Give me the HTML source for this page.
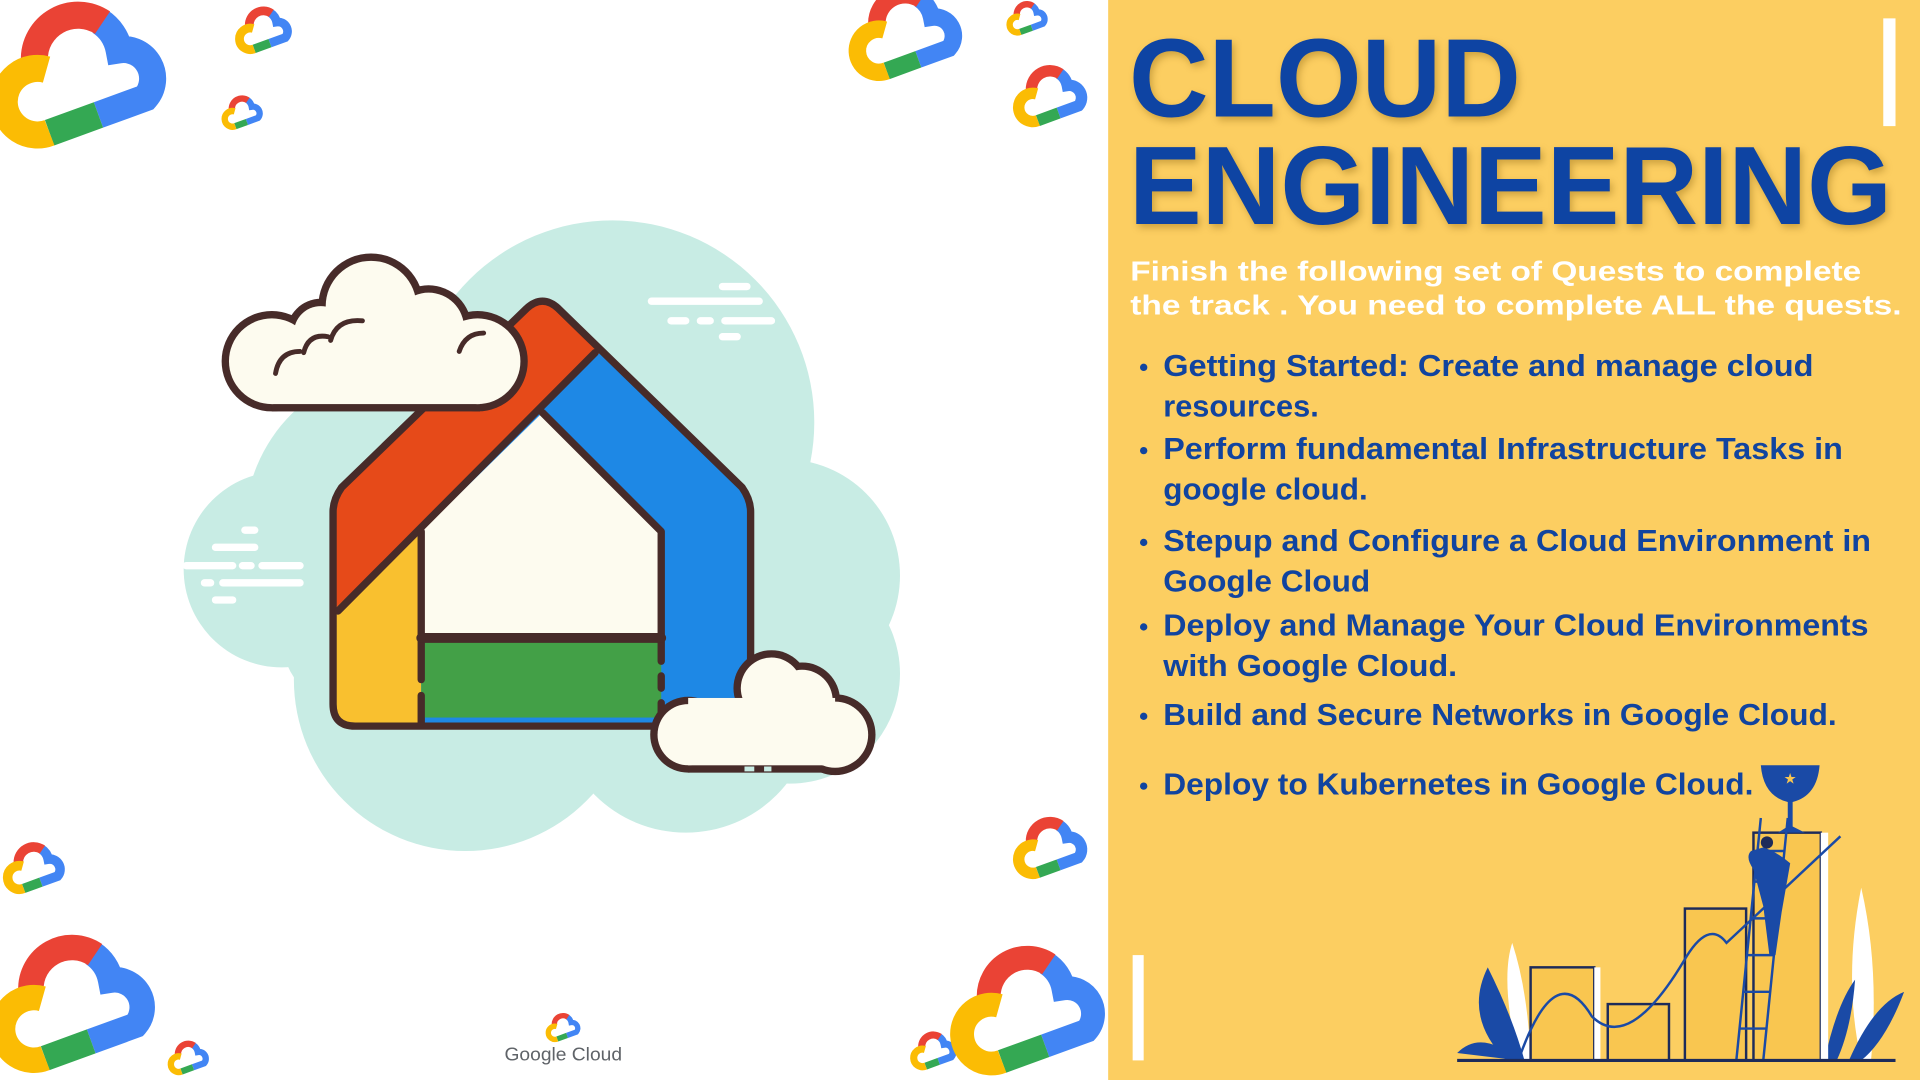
<!DOCTYPE html>
<html><head><meta charset="utf-8"><style>
html,body{margin:0;padding:0;background:#fff;}
svg{display:block;}
</style></head><body>
<svg width="1920" height="1080" viewBox="0 0 1568 882" xmlns="http://www.w3.org/2000/svg">
<defs>
<symbol id="g" viewBox="0 0 100 80" overflow="visible">
<g transform="rotate(-20 50 45)" fill="none" stroke-width="13">
<path d="M68,24 A21,21 0 0 1 72,40 A14,14 0 0 1 76,66 L52,66" stroke="#4285f4"/>
<path d="M52,66 L27,66" stroke="#34a853"/>
<path d="M32,31 A21,21 0 0 1 69,25" stroke="#ea4335"/>
<path d="M27,66 A16,16 0 1 1 36,37" stroke="#fbbc04"/>
</g>
</symbol>
<clipPath id="hc"><path d="M272,418 Q272,408 279,398 L430,252 Q443,240 456,252 L606,398 Q613,408 613,418 L613,575 Q613,593 595,593 L290,593 Q272,593 272,575 Z"/></clipPath>
</defs>
<rect x="0" y="0" width="905" height="882" fill="#fff"/>
<rect x="905" y="0" width="663" height="882" fill="#fcce61"/>

<!-- teal blob -->
<g fill="#c8ece4">
<circle cx="500" cy="345" r="165"/><circle cx="230" cy="465" r="80"/><circle cx="640" cy="470" r="95"/>
<circle cx="645" cy="550" r="90"/><circle cx="380" cy="555" r="140"/><circle cx="560" cy="575" r="105"/>
<circle cx="330" cy="430" r="130"/><circle cx="460" cy="470" r="170"/><circle cx="290" cy="520" r="60"/>
</g>
<g stroke="#fff" stroke-width="6" stroke-linecap="round">
<line x1="532" y1="246" x2="620" y2="246"/><line x1="590" y1="234" x2="610" y2="234"/>
<line x1="548" y1="262" x2="560" y2="262"/><line x1="572" y1="262" x2="580" y2="262"/><line x1="592" y1="262" x2="630" y2="262"/>
<line x1="590" y1="275" x2="602" y2="275"/>
<line x1="200" y1="433" x2="208" y2="433"/><line x1="176" y1="447" x2="208" y2="447"/>
<line x1="152" y1="462" x2="190" y2="462"/><line x1="198" y1="462" x2="205" y2="462"/><line x1="214" y1="462" x2="245" y2="462"/>
<line x1="167" y1="476" x2="172" y2="476"/><line x1="182" y1="476" x2="245" y2="476"/><line x1="176" y1="490" x2="190" y2="490"/>
</g>

<!-- house -->
<g clip-path="url(#hc)">
<rect x="260" y="230" width="360" height="370" fill="#1e88e5"/>
<polygon points="272,499 260,400 443,220 495,283" fill="#e64a19"/>
<polygon points="260,510 344,429 344,600 260,600" fill="#f9c02f"/>
</g>
<polygon points="344,434 443,337 540,434 540,521 344,521" fill="#fdfbef"/>
<rect x="344" y="524" width="196" height="62" fill="#43a047"/>
<g fill="none" stroke="#472b29" stroke-width="6" stroke-linejoin="round" stroke-linecap="round">
<path d="M272,418 Q272,408 279,398 L430,252 Q443,240 456,252 L606,398 Q613,408 613,418 L613,575 Q613,593 595,593 L290,593 Q272,593 272,575 Z"/>
<path d="M486,288 L276,499"/>
<path d="M344,434 L344,555 M344,568 L344,590"/>
<path d="M443,337 L540,434 L540,540 M540,552 L540,562 M540,574 L540,590"/>
<path d="M344,521 L540,521" stroke-width="8"/>
</g>

<!-- cloud 1 -->
<g fill="#472b29">
<circle cx="222" cy="295" r="41"/><circle cx="390" cy="295" r="41"/><circle cx="303" cy="250" r="43"/>
<circle cx="262" cy="272" r="28"/><circle cx="350" cy="268" r="35"/><rect x="222" y="280" width="170" height="56"/>
</g>
<g fill="#fdfbef">
<circle cx="222" cy="295" r="35"/><circle cx="390" cy="295" r="35"/><circle cx="303" cy="250" r="37"/>
<circle cx="262" cy="272" r="22"/><circle cx="350" cy="268" r="29"/><rect x="222" y="280" width="170" height="50"/>
</g>
<g fill="none" stroke="#472b29" stroke-width="4" stroke-linecap="round">
<path d="M225,305 Q228,287 245,287"/><path d="M248,288 Q252,272 268,275"/><path d="M270,278 Q275,260 296,262"/>
<path d="M375,287 Q380,272 395,272"/>
</g>
<!-- cloud 2 -->
<g fill="#472b29">
<circle cx="562" cy="600" r="31"/><circle cx="682" cy="600" r="33"/><circle cx="655" cy="572" r="31"/>
<circle cx="630" cy="562" r="31"/><rect x="562" y="570" width="120" height="61"/>
</g>
<g fill="#fdfbef">
<circle cx="562" cy="600" r="25"/><circle cx="682" cy="600" r="27"/><circle cx="655" cy="572" r="25"/>
<circle cx="630" cy="562" r="25"/><rect x="562" y="570" width="120" height="55"/>
</g>
<path d="M608,628 L616,628 M624,628 L630,628" stroke="#c8ece4" stroke-width="4"/>

<!-- google logos -->
<use href="#g" x="-20" y="-15" width="170" height="136"/>
<use href="#g" x="188" y="0" width="55" height="44"/>
<use href="#g" x="178" y="74" width="40" height="32"/>
<use href="#g" x="685" y="-22" width="110" height="88"/>
<use href="#g" x="819" y="-3" width="40" height="32"/>
<use href="#g" x="822" y="46" width="72" height="58"/>
<use href="#g" x="-2" y="682" width="60" height="48"/>
<use href="#g" x="822" y="660" width="72" height="58"/>
<use href="#g" x="-20" y="748" width="160" height="128"/>
<use href="#g" x="134" y="846" width="40" height="32"/>
<use href="#g" x="740" y="838" width="45" height="36"/>
<use href="#g" x="765" y="748" width="150" height="140"/>
<use href="#g" x="443" y="824" width="34" height="27"/>
<text x="460" y="866" font-family="Liberation Sans, sans-serif" font-size="15" fill="#5f6368" text-anchor="middle" textLength="96" lengthAdjust="spacingAndGlyphs">Google Cloud</text>

<!-- white bars -->
<rect x="1538" y="15" width="10" height="88" fill="#fff"/>
<rect x="925" y="780" width="9" height="86" fill="#fff"/>

<!-- text -->
<g font-family="Liberation Sans, sans-serif" font-weight="bold">
<g fill="#0e44a3" font-size="91" style="filter:drop-shadow(2px 3px 3px rgba(120,80,0,0.35))">
<text x="922" y="95" textLength="320" lengthAdjust="spacingAndGlyphs">CLOUD</text>
<text x="922" y="183" textLength="623" lengthAdjust="spacingAndGlyphs">ENGINEERING</text>
</g>
<g fill="#fff" font-size="23">
<text x="923" y="229" textLength="597" lengthAdjust="spacingAndGlyphs">Finish the following set of Quests to complete</text>
<text x="923" y="257" textLength="630" lengthAdjust="spacingAndGlyphs">the track . You need to complete ALL the quests.</text>
</g>
<g fill="#11449f" font-size="25">
<text x="950" y="307" textLength="531" lengthAdjust="spacingAndGlyphs">Getting Started: Create and manage cloud</text>
<text x="950" y="340" textLength="127" lengthAdjust="spacingAndGlyphs">resources.</text>
<text x="950" y="375" textLength="555" lengthAdjust="spacingAndGlyphs">Perform fundamental Infrastructure Tasks in</text>
<text x="950" y="408" textLength="167" lengthAdjust="spacingAndGlyphs">google cloud.</text>
<text x="950" y="450" textLength="578" lengthAdjust="spacingAndGlyphs">Stepup and Configure  a Cloud Environment in</text>
<text x="950" y="483" textLength="169" lengthAdjust="spacingAndGlyphs">Google Cloud</text>
<text x="950" y="519" textLength="576" lengthAdjust="spacingAndGlyphs">Deploy and Manage Your Cloud Environments</text>
<text x="950" y="552" textLength="240" lengthAdjust="spacingAndGlyphs">with Google Cloud.</text>
<text x="950" y="592" textLength="550" lengthAdjust="spacingAndGlyphs">Build and Secure Networks in Google Cloud.</text>
<text x="950" y="649" textLength="482" lengthAdjust="spacingAndGlyphs">Deploy to Kubernetes in Google Cloud.</text>
<circle cx="934" cy="300" r="3"/><circle cx="934" cy="368" r="3"/><circle cx="934" cy="443" r="3"/>
<circle cx="934" cy="512" r="3"/><circle cx="934" cy="585" r="3"/><circle cx="934" cy="642" r="3"/>
</g>
</g>

<!-- illustration -->
<g>
<path d="M1240,866 Q1225,800 1235,770 Q1248,810 1250,866Z" fill="#fff"/>
<path d="M1230,866 Q1195,830 1215,790 Q1235,830 1245,866Z" fill="#1a4aa6"/>
<path d="M1190,860 Q1210,840 1240,866Z" fill="#1a4aa6"/>
<path d="M1520,866 Q1505,800 1520,725 Q1535,790 1528,866Z" fill="#fff"/>
<path d="M1510,866 Q1530,820 1555,810 Q1540,850 1520,866Z" fill="#1a4aa6"/>
<path d="M1490,866 Q1500,820 1515,800 Q1512,840 1500,866Z" fill="#1a4aa6"/>
<g fill="#f9c650" stroke="#1d2b5a" stroke-width="2">
<rect x="1250" y="790" width="52" height="76"/>
<rect x="1313" y="820" width="50" height="46"/>
<rect x="1376" y="742" width="50" height="124"/>
<rect x="1432" y="680" width="55" height="186"/>
</g>
<rect x="1302" y="790" width="5" height="76" fill="#fff"/>
<rect x="1487" y="680" width="6" height="186" fill="#fff"/>
<path d="M1240,866 Q1270,780 1300,830 Q1330,860 1375,785 Q1395,750 1410,770 L1503,683" fill="none" stroke="#1a4aa6" stroke-width="2"/>
<path d="M1418,866 L1438,668 M1440,866 L1460,668" stroke="#1a4aa6" stroke-width="2"/>
<g stroke="#1a4aa6" stroke-width="2"><line x1="1420" y1="840" x2="1442" y2="840"/><line x1="1423" y1="810" x2="1445" y2="810"/><line x1="1426" y1="780" x2="1448" y2="780"/><line x1="1429" y1="750" x2="1451" y2="750"/><line x1="1432" y1="720" x2="1454" y2="720"/><line x1="1435" y1="695" x2="1457" y2="695"/></g>
<path d="M1438,625 L1486,625 Q1484,650 1464,655 L1464,675 L1474,680 L1452,680 L1460,675 L1460,655 Q1440,650 1438,625Z" fill="#1a4aa6"/>
<text x="1462" y="640" font-size="12" fill="#f9c650" text-anchor="middle">★</text>
<path d="M1430,695 Q1425,700 1432,710 L1440,740 L1445,780 L1450,780 L1455,745 L1462,705 Q1450,695 1440,692Z" fill="#1a4aa6"/>
<circle cx="1443" cy="688" r="5" fill="#1d2b5a"/>
<line x1="1190" y1="866" x2="1548" y2="866" stroke="#1d2b5a" stroke-width="2.5"/>
</g>
</svg>
</body></html>
